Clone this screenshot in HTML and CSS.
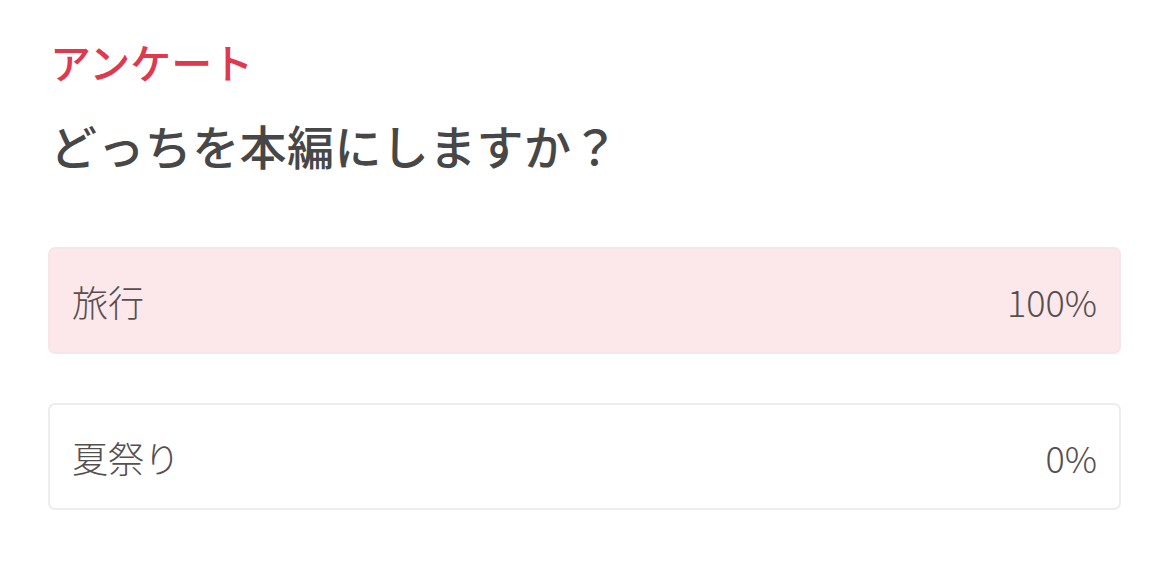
FILE: index.html
```html
<!DOCTYPE html>
<html lang="ja">
<head>
<meta charset="utf-8">
<link rel="stylesheet" href="styles.css">
</head>
<body>
<section class="poll">
  <div class="poll-label">アンケート</div>
  <h1 class="poll-question">どっちを本編にしますか？</h1>
  <ul class="poll-options">
    <li class="option option-win">
      <span class="option-name">旅行</span>
      <span class="option-pct">100%</span>
    </li>
    <li class="option">
      <span class="option-name">夏祭り</span>
      <span class="option-pct">0%</span>
    </li>
  </ul>
</section>
</body>
</html>
```
FILE: styles.css
```css
html, body {
  margin: 0;
  padding: 0;
  background: #ffffff;
}
body {
  font-family: "Noto Sans CJK JP", "Noto Sans", sans-serif;
}
.poll {
  padding: 35px 49px 0 48px;
}
.poll-label {
  color: #e0384d;
  font-size: 41px;
  font-weight: 500;
  line-height: 52px;
  padding-left: 2px;
}
.poll-question {
  margin: 28px 0 0 2px;
  color: #474747;
  font-size: 47px;
  font-weight: 500;
  line-height: 60px;
  letter-spacing: 0.4px;
}
.poll-options {
  list-style: none;
  margin: 72px 0 0 0;
  padding: 0;
  display: flex;
  flex-direction: column;
  gap: 49px;
}
.option {
  height: 107px;
  box-sizing: border-box;
  border: 2px solid #ededed;
  border-radius: 7px;
  display: flex;
  align-items: center;
  justify-content: space-between;
  padding: 0 22px 0 22px;
  color: #555050;
  font-size: 36px;
  font-weight: 300;
}
.option-win {
  background: #fce8ea;
  border-color: #f6e6e8;
}
```
